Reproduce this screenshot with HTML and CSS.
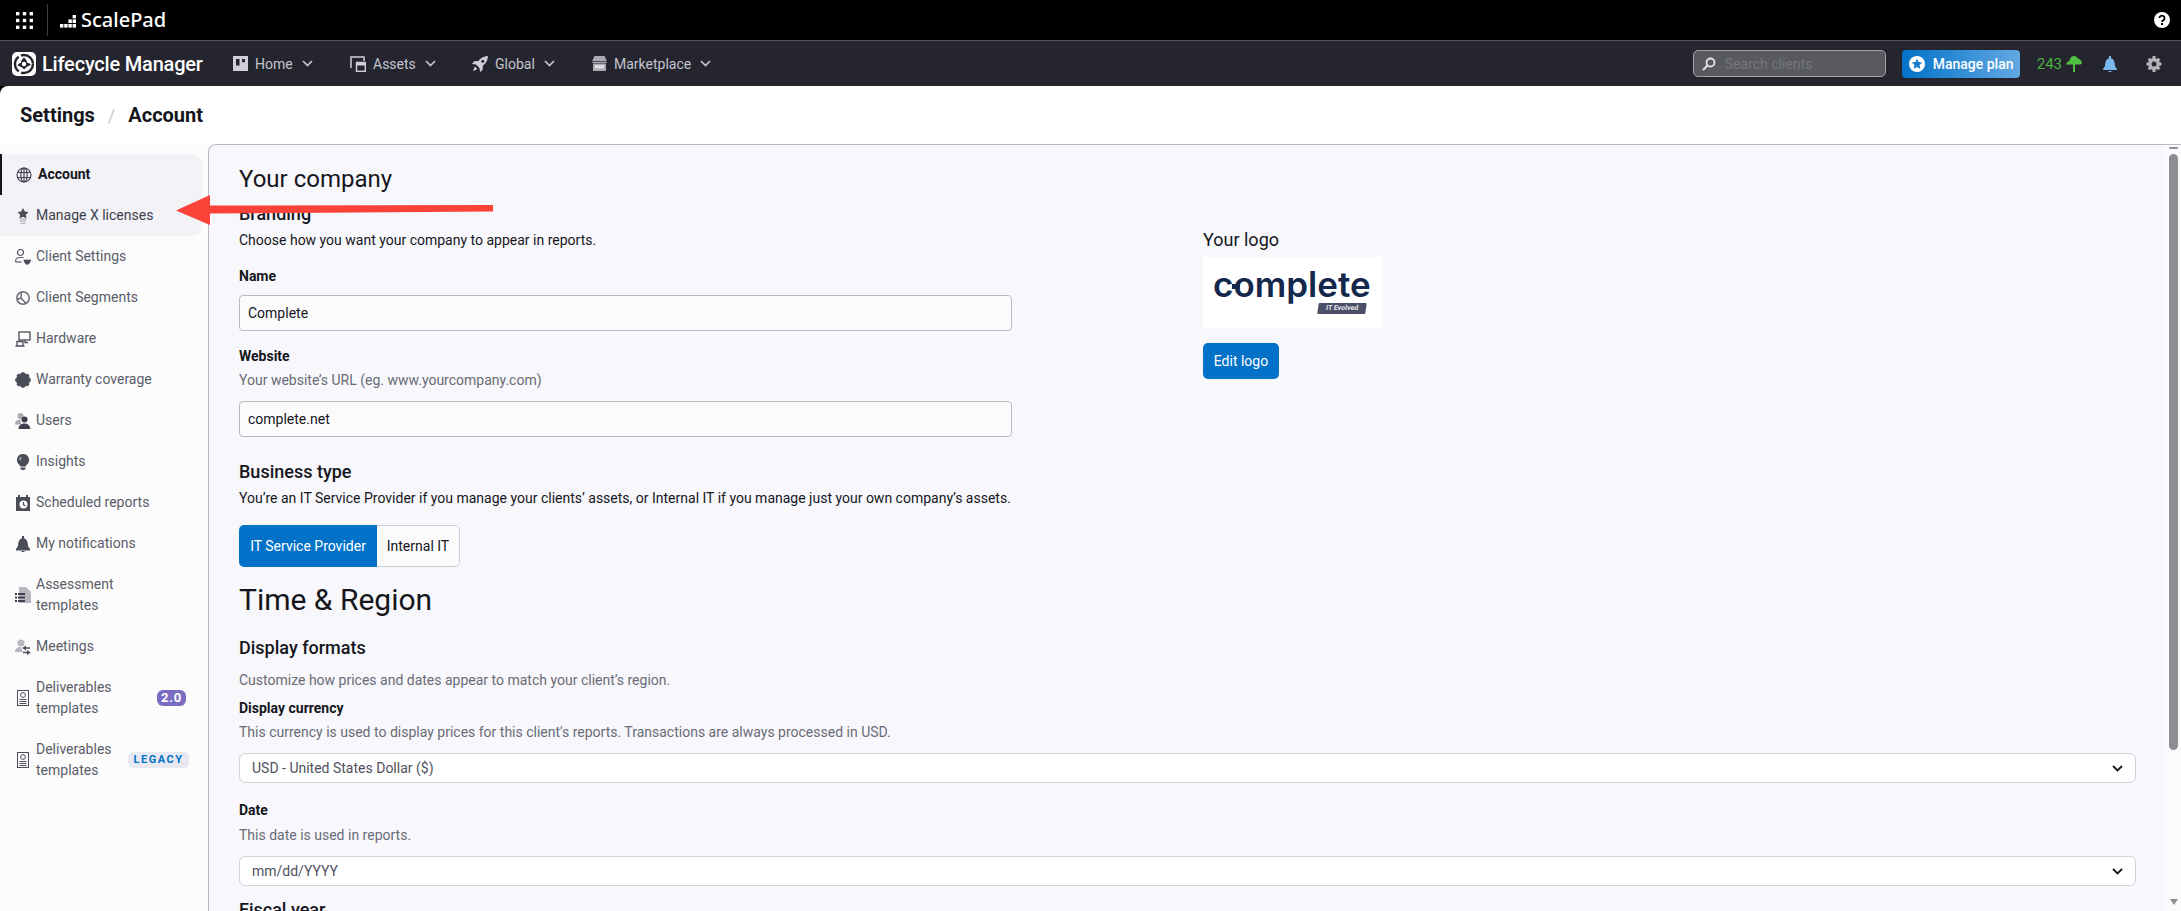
FILE: index.html
```html
<!DOCTYPE html>
<html lang="en">
<head>
<meta charset="utf-8">
<title>Settings / Account</title>
<link rel="stylesheet" href="styles.css">
</head>
<body>
<div class="app">
  <header class="topbar">
    <svg class="grid-icon" viewBox="0 0 17 17" width="17" height="17" fill="#fff"><rect x="0" y="0" width="3.4" height="3.4"/><rect x="6.8" y="0" width="3.4" height="3.4"/><rect x="13.6" y="0" width="3.4" height="3.4"/><rect x="0" y="6.8" width="3.4" height="3.4"/><rect x="6.8" y="6.8" width="3.4" height="3.4"/><rect x="13.6" y="6.8" width="3.4" height="3.4"/><rect x="0" y="13.6" width="3.4" height="3.4"/><rect x="6.8" y="13.6" width="3.4" height="3.4"/><rect x="13.6" y="13.6" width="3.4" height="3.4"/></svg>
    <span class="top-sep"></span>
    <svg class="sp-mark" viewBox="0 0 16 14" width="16" height="14" fill="#fff"><rect x="0" y="10" width="3.4" height="3.6"/><rect x="4.2" y="10" width="3.4" height="3.6"/><rect x="8.400" y="10" width="3.400" height="3.600"/><rect x="8.400" y="5.400" width="3.400" height="3.600"/><rect x="12.600" y="10" width="3.400" height="3.600"/><rect x="12.600" y="5.400" width="3.400" height="3.600"/><rect x="12.600" y="1" width="3.400" height="3.400"/></svg>
    <span class="sp-name">ScalePad</span>
    <svg class="help" viewBox="0 0 16 16" width="16" height="16"><circle cx="8" cy="8" r="8" fill="#fff"/><path d="M5.4 6.1a2.6 2.4 0 1 1 3.9 2.1c-.9.5-1.3.9-1.3 1.7" fill="none" stroke="#000" stroke-width="1.8"/><rect x="7" y="11" width="2" height="2" fill="#000"/></svg>
  </header>

  <nav class="navbar">
    <svg class="lm-logo" viewBox="0 0 24 24" width="24" height="24"><rect width="24" height="24" rx="5" fill="#fff"/><circle cx="12" cy="12" r="9" fill="none" stroke="#24252f" stroke-width="2.400" stroke-dasharray="17 2.500"/><path fill="#24252f" d="M12 5.500c2 1.600 3 3.300 3 5 2 .4 3.400 1.300 4 2.500-2 .6-4.600 2-7 4.500-1.500-2-4-3.200-6.500-3.700.4-1.400 1.700-2.500 3.500-3 0-2 1.200-3.800 3-5.300z"/><circle cx="12" cy="12" r="2.200" fill="#fff"/></svg>
    <span class="lm-name">Lifecycle Manager</span>
    <div class="nav-links">
      <a class="nav-link nav-home"><svg viewBox="0 0 15 15" width="15" height="15"><path fill="#d0d1d8" d="M0 0h15v15H0z"/><path fill="#24252f" d="M3 3h3.500v6.500H3zM9 3h3v3.200H9z"/></svg><span>Home</span><svg class="chev" viewBox="0 0 11 7" width="11" height="7"><path d="M1 1l4.500 4.500L10 1" fill="none" stroke="#c3c4cc" stroke-width="1.700"/></svg></a>
      <a class="nav-link nav-assets"><svg viewBox="0 0 16 16" width="16" height="16"><path fill="none" stroke="#d0d1d8" stroke-width="1.500" d="M1 12V1h13v4"/><rect x="6.500" y="6.500" width="8.800" height="8.800" fill="none" stroke="#d0d1d8" stroke-width="1.400"/><path fill="#d0d1d8" d="M6 6h10v3.500H6z"/></svg><span>Assets</span><svg class="chev" viewBox="0 0 11 7" width="11" height="7"><path d="M1 1l4.500 4.500L10 1" fill="none" stroke="#c3c4cc" stroke-width="1.700"/></svg></a>
      <a class="nav-link nav-global"><svg viewBox="0 0 16 16" width="16" height="16" fill="#d0d1d8"><path d="M16 0c-.2 4.500-2.200 7.500-5 9.600L10.500 14 8 16l-.5-4L4 8.500 0 8l2-2.700L6.400 5C8.500 2.200 11.500.2 16 0z"/><circle cx="10.800" cy="5.200" r="1.500" fill="#24252f"/><path d="M2.800 10.500l2.700 2.700L1 15z"/></svg><span>Global</span><svg class="chev" viewBox="0 0 11 7" width="11" height="7"><path d="M1 1l4.500 4.500L10 1" fill="none" stroke="#c3c4cc" stroke-width="1.700"/></svg></a>
      <a class="nav-link nav-market"><svg viewBox="0 0 15 15" width="15" height="15" fill="#a9aab2"><path d="M2.500 0h10L15 5.500c0 1-.8 1.500-1.500 1.500h-12C.8 7 0 6.500 0 5.500z"/><path d="M1 7.500h13V15H1z"/><path fill="#24252f" d="M0 5.200h15v.7H0z"/><path fill="#dcdde2" d="M3 9h9v3.500H3z"/></svg><span>Marketplace</span><svg class="chev" viewBox="0 0 11 7" width="11" height="7"><path d="M1 1l4.500 4.500L10 1" fill="none" stroke="#c3c4cc" stroke-width="1.700"/></svg></a>
    </div>
    <div class="search">
      <svg viewBox="0 0 14 14" width="14" height="14"><circle cx="8.500" cy="5.500" r="4" fill="none" stroke="#e4e4e8" stroke-width="1.800"/><path d="M5.500 8.500L1 13" stroke="#e4e4e8" stroke-width="2"/></svg>
      <span>Search clients</span>
    </div>
    <a class="plan">
      <svg viewBox="0 0 16 16" width="16" height="16"><circle cx="8" cy="8" r="8" fill="#fff"/><path fill="#1a7ccb" d="M8 2.800l1.600 3.300 3.600.5-2.600 2.500.6 3.600L8 11l-3.200 1.700.6-3.600-2.600-2.500 3.600-.5z"/></svg>
      <span>Manage plan</span>
    </a>
    <span class="trees">243</span>
    <svg class="tree" viewBox="0 0 16 16" width="16" height="16" fill="#52c041"><path d="M8 0c2 0 3.300 1 3.800 2.500 1.600 0 3.200 1.700 4.200 4.500-.5 1-1.500 1.500-3 1.500H9V16H7V8.500H0C.5 6.500 2 5 3.600 4.700 4 2 5.700 0 8 0z"/></svg>
    <svg class="bell" viewBox="0 0 14 16" width="14" height="16" fill="#7ab8ee"><path d="M6 0h2v2.200c2.500.7 3.500 2.800 3.700 5.300.2 2.500.8 4 2.300 5.500v1H0v-1c1.500-1.500 2.100-3 2.300-5.500C2.500 5 3.500 2.900 6 2.200z"/><path d="M5 15h4l-1 1H6z"/></svg>
    <svg class="gear" viewBox="0 0 16 16" width="16" height="16"><circle cx="8" cy="8" r="4.200" fill="none" stroke="#b4b5bb" stroke-width="3.400"/><g stroke="#b4b5bb" stroke-width="3"><path d="M8 0v3M8 13v3M0.500 8h3M12.500 8h3M2.700 2.700l2.100 2.100M11.200 11.200l2.100 2.100M2.700 13.300l2.100-2.100M11.200 4.800l2.100-2.100"/></g></svg>
  </nav>

  <div class="page">
    <div class="crumbs"><span>Settings</span><span class="slash">/</span><span>Account</span></div>
    <div class="workspace">
      <aside class="sidebar">
        <a class="side-item is-active">
          <svg viewBox="0 0 16 16" width="16" height="16" fill="none" stroke="#3d3f4c" stroke-width="1.100"><circle cx="8" cy="8" r="7"/><ellipse cx="8" cy="8" rx="3.200" ry="7"/><path d="M8 1v14M1.500 5.500h13M1.500 10.500h13"/></svg>
          <span>Account</span>
        </a>
        <a class="side-item is-soft">
          <svg viewBox="0 0 16 16" width="16" height="16"><path fill="#4a4c58" d="M8 0l1.800 3.600 3.700.5-2.700 2.600.7 3.800L8 8.700l-3.500 1.800.7-3.800L2.500 4.100l3.700-.5z"/><path fill="#b6b7bf" d="M4.500 10.500h7v1.200h-7zM5 12.600h6v1.200H5zM5.500 14.800h5V16h-5z"/></svg>
          <span>Manage X licenses</span>
        </a>
        <a class="side-item">
          <svg viewBox="0 0 16 16" width="16" height="16" fill="none" stroke="#5a5c68" stroke-width="1.200"><circle cx="5.500" cy="3.500" r="3"/><path d="M.7 13v-1.500C.7 9.500 2.500 8.500 5.500 8.500h3"/><path d="M.7 13h6"/><path fill="#4a4c58" stroke="none" d="M8.500 10.500c1.200.4 2 .4 3.700 0 1.700.4 2.600.4 3.800 0 0 2.500-1.500 4.300-3.800 5.500-2.200-1.200-3.700-3-3.700-5.500z"/></svg>
          <span>Client Settings</span>
        </a>
        <a class="side-item">
          <svg viewBox="0 0 16 16" width="16" height="16" fill="none" stroke="#6a6c78" stroke-width="1.500"><circle cx="8" cy="8" r="6.200"/><path d="M6.500 2L6 8l5 5.500M6 8L2 9.500"/></svg>
          <span>Client Segments</span>
        </a>
        <a class="side-item">
          <svg viewBox="0 0 16 16" width="16" height="16" fill="none" stroke="#4a4c58" stroke-width="1.300"><rect x="4" y="1" width="11" height="8"/><path d="M.5 15h9M2 15v-4.500h6V15"/><path d="M10 9v2.500h3"/></svg>
          <span>Hardware</span>
        </a>
        <a class="side-item">
          <svg viewBox="0 0 16 16" width="16" height="16" fill="#4a4c58"><circle cx="8" cy="8" r="7"/><g stroke="#4a4c58" stroke-width="3"><path d="M8 .2v15.600M.2 8h15.600M2.500 2.500l11 11M2.500 13.500l11-11"/></g></svg>
          <span>Warranty coverage</span>
        </a>
        <a class="side-item">
          <svg viewBox="0 0 16 16" width="16" height="16"><circle cx="5.500" cy="3" r="3" fill="#a9aab2"/><path fill="#a9aab2" d="M0 11.500c0-3.500 2.500-5 5.500-5L6 11.500z"/><circle cx="9.500" cy="6.500" r="3" fill="#3d3f4c"/><path fill="#3d3f4c" d="M3.500 16c0-3.500 2.500-5.500 6-5.500s5.500 2 6 5.500z"/></svg>
          <span>Users</span>
        </a>
        <a class="side-item">
          <svg viewBox="0 0 16 16" width="16" height="16" fill="#4a4c58"><path d="M8 0a6 6 0 0 1 3.500 10.900c-.5.400-.7.800-.8 1.600H5.300c-.1-.8-.3-1.200-.8-1.600A6 6 0 0 1 8 0z"/><path d="M5.500 13.500h5V15l-1.500 1H7l-1.500-1z"/><path fill="#fcfcfd" d="M4.500 6c0-1.800 1-3 2.500-3.300C5.800 3.800 5.500 5 5.500 6z"/></svg>
          <span>Insights</span>
        </a>
        <a class="side-item">
          <svg viewBox="0 0 16 16" width="16" height="16"><path fill="#4a4c58" d="M1 2h14v14H1z"/><rect x="3" y="0" width="2" height="4" fill="#4a4c58"/><rect x="11" y="0" width="2" height="4" fill="#4a4c58"/><circle cx="8.500" cy="9.500" r="4" fill="#fcfcfd"/><path d="M8.500 7v2.700l1.800 1.200" stroke="#4a4c58" stroke-width="1.200" fill="none"/></svg>
          <span>Scheduled reports</span>
        </a>
        <a class="side-item">
          <svg viewBox="0 0 14 16" width="16" height="16" fill="#4a4c58"><path d="M6 0h2v2.200c2.500.7 3.500 2.800 3.700 5.300.2 2.500.8 4 2.300 5.500v1.500H0V13c1.500-1.500 2.100-3 2.300-5.500C2.500 5 3.500 2.900 6 2.200z"/><path d="M5 15h4l-1 1H6z"/></svg>
          <span>My notifications</span>
        </a>
        <a class="side-item is-tall">
          <svg viewBox="0 0 16 16" width="16" height="16"><path fill="#b6b7bf" d="M4 0h7l5 5v11H4z"/><g fill="#3d3f4c"><path d="M0 6h2v2H0zM3 6h7v2H3zM0 9.500h2v2H0zM3 9.500h7v2H3zM0 13h2v2H0zM3 13h7v2H3z"/></g></svg>
          <span>Assessment templates</span>
        </a>
        <a class="side-item">
          <svg viewBox="0 0 16 16" width="16" height="16"><circle cx="6" cy="4" r="3.500" fill="#b6b7bf"/><path fill="#b6b7bf" d="M0 13c0-3.500 2.500-5 6-5l2 5z"/><path fill="none" stroke="#4a4c58" stroke-width="1.400" d="M8 9h7M8 13.500h7"/><path fill="#4a4c58" d="M11 6.500v5L7.500 9zM12 11v5l3.500-2.500z"/></svg>
          <span>Meetings</span>
        </a>
        <a class="side-item is-tall">
          <svg viewBox="0 0 12 16" width="16" height="16"><rect x=".5" y=".5" width="11" height="15" fill="#fcfcfd" stroke="#4a4c58"/><circle cx="6" cy="5" r="2.400" fill="none" stroke="#4a4c58"/><path d="M2.500 9.500h7M2.500 11.500h7M2.500 13.500h7" stroke="#4a4c58"/></svg>
          <span>Deliverables templates</span>
          <b class="badge badge-new">2.0</b>
        </a>
        <a class="side-item is-tall">
          <svg viewBox="0 0 12 16" width="16" height="16"><rect x=".5" y=".5" width="11" height="15" fill="#fcfcfd" stroke="#4a4c58"/><circle cx="6" cy="5" r="2.400" fill="none" stroke="#4a4c58"/><path d="M2.500 9.500h7M2.500 11.500h7M2.500 13.500h7" stroke="#4a4c58"/></svg>
          <span>Deliverables templates</span>
          <b class="badge badge-legacy">LEGACY</b>
        </a>
      </aside>

      <main class="panel">
        <div class="panel-body">
          <div class="company">
            <section class="company-form">
              <h1 class="h-company">Your company</h1>
              <h3 class="h-sub h-branding">Branding</h3>
              <p class="desc">Choose how you want your company to appear in reports.</p>
              <label class="label label-name">Name</label>
              <div class="field">Complete</div>
              <label class="label label-web">Website</label>
              <p class="hint">Your website’s URL (eg. www.yourcompany.com)</p>
              <div class="field field-web">complete.net</div>
            </section>
            <section class="logo-col">
              <h4 class="logo-title">Your logo</h4>
              <div class="logo-box">
                <span class="logo-word">complete</span>
                <span class="logo-tag">IT Evolved</span>
              </div>
              <button class="btn-edit">Edit logo</button>
            </section>
          </div>
          <h3 class="h-sub h-business">Business type</h3>
          <p class="desc desc-business">You’re an IT Service Provider if you manage your clients’ assets, or Internal IT if you manage just your own company’s assets.</p>
          <div class="segment"><span class="seg seg-on">IT Service Provider</span><span class="seg seg-off">Internal IT</span></div>
          <h2 class="h-time">Time &amp; Region</h2>
          <h3 class="h-sub h-formats">Display formats</h3>
          <p class="hint hint-formats">Customize how prices and dates appear to match your client’s region.</p>
          <label class="label label-currency">Display currency</label>
          <p class="hint">This currency is used to display prices for this client's reports. Transactions are always processed in USD.</p>
          <div class="select"><span>USD - United States Dollar ($)</span><svg viewBox="0 0 11 7" width="11" height="7"><path d="M1 1l4.500 4.500L10 1" fill="none" stroke="#15161c" stroke-width="1.800"/></svg></div>
          <label class="label label-date">Date</label>
          <p class="hint hint-date">This date is used in reports.</p>
          <div class="select"><span>mm/dd/YYYY</span><svg viewBox="0 0 11 7" width="11" height="7"><path d="M1 1l4.500 4.500L10 1" fill="none" stroke="#15161c" stroke-width="1.800"/></svg></div>
          <h3 class="h-sub h-fiscal">Fiscal year</h3>
        </div>
        <div class="scrollbar">
          <span class="sb-up"></span>
          <span class="sb-thumb"></span>
          <span class="sb-down"></span>
        </div>
      </main>
    </div>
  </div>

  <svg class="callout" viewBox="0 0 320 32" width="320" height="32"><path fill="#fb4238" d="M0 15.500L34 0v10.500L317 10v6.500L34 18.500V30z"/></svg>
</div>
</body>
</html>
```

FILE: styles.css
```css
* { box-sizing: border-box; }
html, body { margin: 0; height: 100%; }
body { font-family: Roboto, "Liberation Sans", sans-serif; font-size: 14px; color: #15161c; overflow: hidden; background: #000; }
h1, h2, h3, h4, p { margin: 0; font-weight: 400; }
svg { display: block; flex: none; }
a { color: inherit; }

.app { position: relative; height: 911px; display: flex; flex-direction: column; overflow: hidden; }

/* Top bar */
.topbar { height: 41px; flex: none; background: #000; border-bottom: 1px solid #55565c; display: flex; align-items: center; padding: 0 11px 0 16px; }
.top-sep { width: 1px; height: 32px; background: #3d3d3d; margin: 0 12px 0 14px; }
.sp-mark { margin-top: 2px; }
.sp-name { font-family: "Noto Sans", sans-serif; font-size: 20px; font-weight: 500; letter-spacing: 0; color: #fff; margin-left: 5px; line-height: 30px; }
.help { margin-left: auto; }

/* Navigation */
.navbar { height: 45px; flex: none; background: #24252f; display: flex; align-items: center; padding: 0 18px 0 12px; color: #c3c4cc; }
.lm-name { font-size: 20px; font-weight: 500; color: #fff; margin-left: 6px; width: 191px; white-space: nowrap; letter-spacing: -.2px; }
.nav-links { display: flex; align-items: center; }
.nav-link { display: flex; align-items: center; gap: 7px; font-size: 14px; }
.nav-link .chev { margin-left: 2px; }
.nav-home { width: 117px; }
.nav-assets { width: 122px; }
.nav-global { width: 120px; }
.search { margin-left: auto; width: 193px; height: 27px; background: #585a60; border: 1px solid #a3a4a9; border-radius: 5px; display: flex; align-items: center; gap: 9px; padding-left: 8px; color: #75767c; font-size: 14px; }
.plan { margin-left: 16px; width: 118px; height: 28px; border-radius: 4px; background: linear-gradient(90deg, #0272c8, #62a8e2); display: flex; align-items: center; gap: 8px; padding-left: 7px; color: #fff; font-weight: 500; font-size: 14px; white-space: nowrap; }
.trees { margin-left: 17px; color: #4caf3f; font-size: 15px; }
.tree { margin-left: 4px; }
.bell { margin-left: 21px; }
.gear { margin-left: 29px; margin-right: 1px; }

/* Page */
.page { flex: 1; min-height: 0; background: #fff; border-radius: 8px 0 0 0; display: flex; flex-direction: column; }
.crumbs { height: 58px; flex: none; display: flex; align-items: center; padding: 0 0 0 20px; font-size: 20px; font-weight: 700; color: #15161c; }
.slash { color: #c9cad0; font-weight: 400; font-size: 18px; margin: 0 13px; }
.workspace { flex: 1; min-height: 0; display: flex; }

/* Sidebar */
.sidebar { width: 208px; flex: none; padding: 10px 6px 0 0; background: #fcfcfd; }
.side-item { display: flex; align-items: center; height: 41px; padding-left: 15px; gap: 5px; color: #5a5c68; line-height: 21px; font-size: 14px; }
.side-item span { flex: none; }
.is-tall { height: 62px; }
.is-tall span { width: 96px; }
.is-active { background: #f2f2f7; border-left: 2px solid #15161c; padding-left: 14px; border-radius: 0 10px 0 0; color: #15161c; font-weight: 700; font-size: 14px; gap: 6px; }
.is-soft { background: #f2f2f7; border-radius: 0 0 10px 0; color: #3d3f4c; }
.badge { border-radius: 6px; font-style: normal; height: 16px; line-height: 16px; text-align: center; }
.badge-new { background: #7a6cc0; color: #fff; font-size: 13px; width: 29px; margin-left: 20px; letter-spacing: .8px; }
.badge-legacy { background: #e8e9f0; color: #0272c8; font-size: 11px; width: 61px; margin-left: -9px; letter-spacing: 1.5px; }

/* Panel */
.panel { flex: 1; min-width: 0; display: flex; background: #f8f8fc; border: 1px solid #b9bac2; border-width: 1px 0 0 1px; border-radius: 8px 0 0 0; }
.panel-body { flex: 1; min-width: 0; padding: 20px 30px 0 30px; overflow: hidden; }
.company { display: grid; grid-template-columns: 773px 1fr; column-gap: 191px; }
.h-company { font-size: 24px; line-height: 29px; }
.h-sub { font-size: 18px; font-weight: 500; line-height: 22px; }
.h-branding { margin-top: 9px; }
.desc { line-height: 20px; margin-top: 5px; }
.label { display: block; font-weight: 700; line-height: 20px; font-size: 14px; color: #15161c; }
.label-name { margin-top: 16px; }
.field { height: 36px; margin-top: 9px; background: #fbfbfc; border: 1px solid #b9bbc4; border-radius: 4px; padding-left: 8px; display: flex; align-items: center; }
.label-web { margin-top: 15px; }
.hint { line-height: 20px; margin-top: 4px; color: #696b76; }
.field-web { margin-top: 11px; }

.logo-col { padding-top: 64px; }
.logo-title { font-size: 18px; line-height: 22px; }
.logo-box { position: relative; width: 179px; height: 71px; margin-top: 6px; background: #fff; padding-left: 10px; }
.logo-word { position: relative; display: block; font-family: Inter, sans-serif; font-weight: 600; font-size: 35px; line-height: 48px; letter-spacing: 0; color: #14284b; padding-top: 3px; }
.logo-word::after { content: ""; position: absolute; left: 19px; top: 27px; width: 8px; height: 5px; background: #14284b; }
.logo-tag { position: absolute; left: 115px; top: 46px; width: 48px; height: 11px; background: #4b5068; color: #e6e7ee; font-size: 7px; line-height: 11px; text-align: center; font-weight: 700; transform: skewX(-8deg); border-radius: 1px; }
.btn-edit { display: block; margin-top: 15px; width: 76px; height: 36px; background: #0272c8; color: #fff; border: 0; border-radius: 5px; font: 400 14px Roboto, sans-serif; padding: 0; }

.h-business { margin-top: 24px; }
.desc-business { margin-top: 5px; }
.segment { display: flex; width: 221px; height: 42px; margin-top: 17px; }
.seg { display: flex; align-items: center; justify-content: center; }
.seg-on { width: 138px; background: #0272c8; color: #fff; border-radius: 5px 0 0 5px; }
.seg-off { flex: 1; background: #fbfbfc; border: 1px solid #cfd0d6; border-left: 0; border-radius: 0 5px 5px 0; }
.h-time { font-size: 30px; line-height: 38px; margin-top: 14px; }
.h-formats { margin-top: 18px; }
.hint-formats { margin-top: 11px; }
.label-currency { margin-top: 8px; }
.select { height: 30px; margin-top: 11px; background: #fff; border: 1px solid #d0d3dc; border-radius: 6px; padding: 0 12px 0 12px; display: flex; align-items: center; justify-content: space-between; color: #4f5160; }
.label-date { margin-top: 17px; }
.hint-date { margin-top: 5px; }
.h-fiscal { margin-top: 13px; }

.scrollbar { width: 15px; flex: none; background: #fbfbfd; position: relative; display: flex; flex-direction: column; align-items: center; padding-top: 2px; }
.sb-up { width: 9px; height: 2px; background: #8e8e92; border-radius: 1px; }
.sb-thumb { width: 9px; height: 596px; margin-top: 5px; background: #8e8e92; border-radius: 5px; }
.sb-down { margin-top: auto; margin-bottom: 6px; width: 0; height: 0; border: 4.5px solid transparent; border-top: 6px solid #8e8e92; border-bottom: 0; }

/* Annotation arrow laid over the page */
.callout { position: absolute; left: 176px; top: 195px; }
```
